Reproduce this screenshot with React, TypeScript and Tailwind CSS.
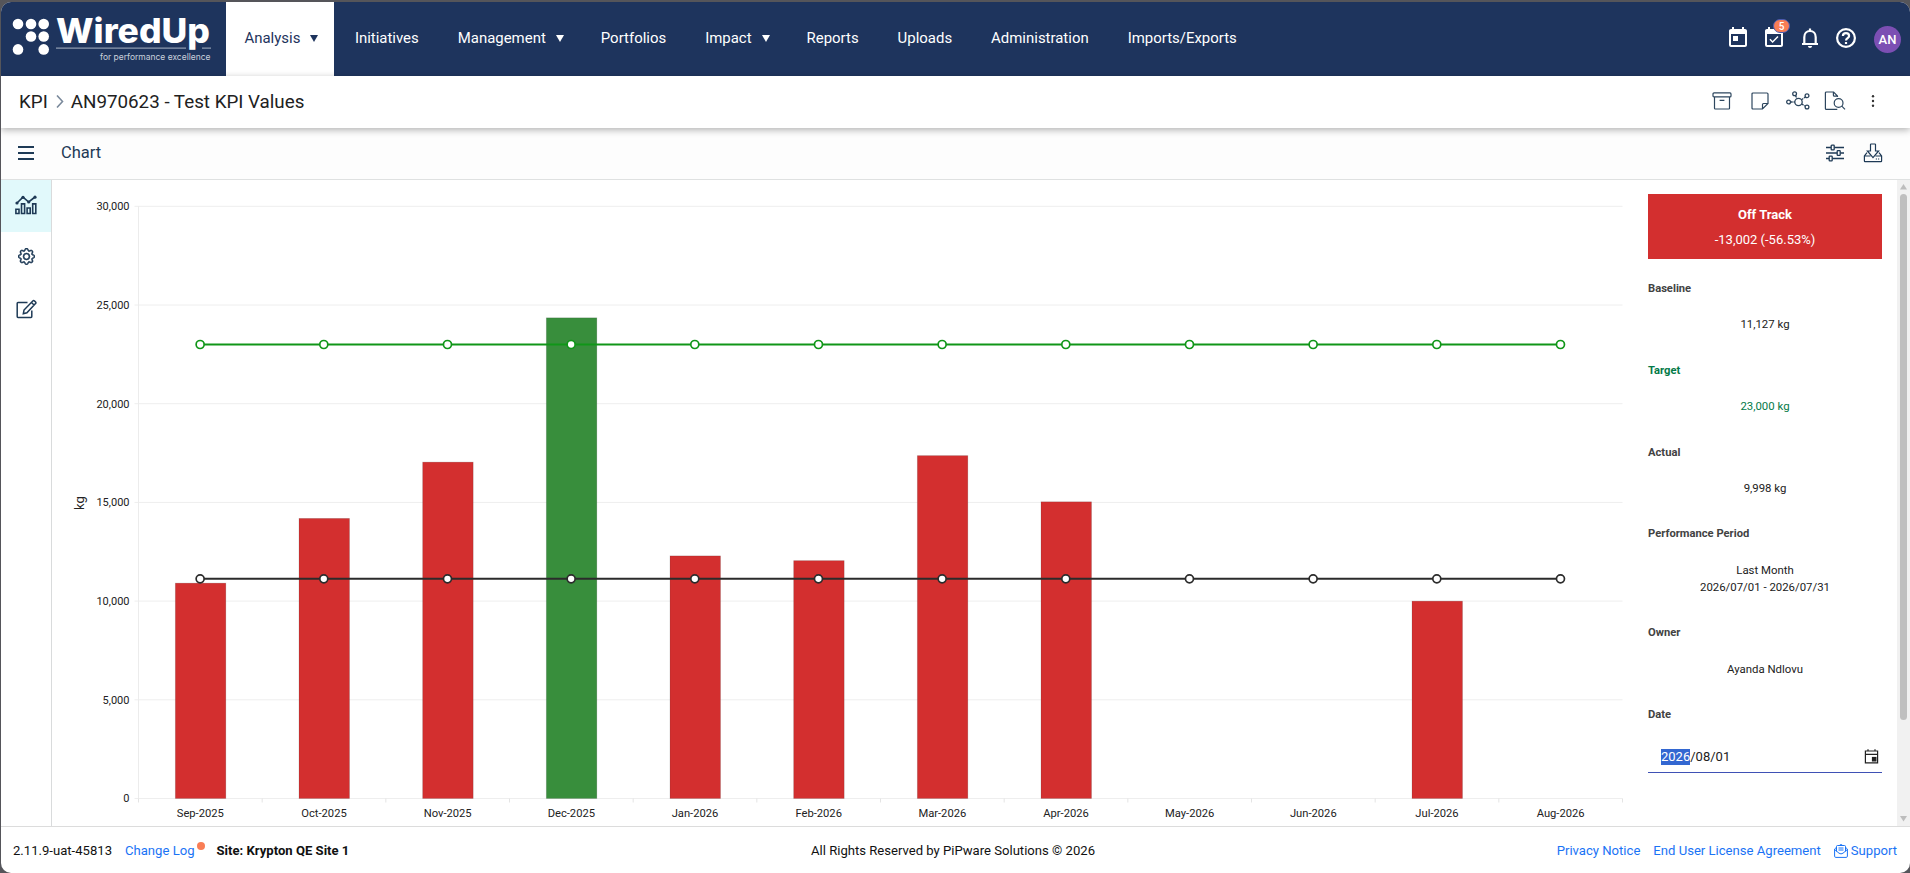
import React from 'react';
import { BsGear } from 'react-icons/bs';
import { MdEventAvailable, MdToday } from 'react-icons/md';

interface NavItem {
  label: string;
  menu?: boolean;
  active?: boolean;
}

const NAV_ITEMS: NavItem[] = [
  { label: 'Analysis', menu: true, active: true },
  { label: 'Initiatives' },
  { label: 'Management', menu: true },
  { label: 'Portfolios' },
  { label: 'Impact', menu: true },
  { label: 'Reports' },
  { label: 'Uploads' },
  { label: 'Administration' },
  { label: 'Imports/Exports' },
];

const TARGET = 23000;
const BASELINE = 11127;

const DATA: { month: string; value: number | null }[] = [
  { month: 'Sep-2025', value: 10910 },
  { month: 'Oct-2025', value: 14190 },
  { month: 'Nov-2025', value: 17040 },
  { month: 'Dec-2025', value: 24350 },
  { month: 'Jan-2026', value: 12290 },
  { month: 'Feb-2026', value: 12050 },
  { month: 'Mar-2026', value: 17370 },
  { month: 'Apr-2026', value: 15030 },
  { month: 'May-2026', value: null },
  { month: 'Jun-2026', value: null },
  { month: 'Jul-2026', value: 9998 },
  { month: 'Aug-2026', value: null },
];

const DETAILS = [
  { label: 'Baseline', lines: ['11,127 kg'] },
  { label: 'Target', lines: ['23,000 kg'], green: true },
  { label: 'Actual', lines: ['9,998 kg'] },
  { label: 'Performance Period', lines: ['Last Month', '2026/07/01 - 2026/07/31'] },
  { label: 'Owner', lines: ['Ayanda Ndlovu'] },
];

const Logo: React.FC = () => (
  <svg width="225" height="74" viewBox="0 2 225 74" className="shrink-0" fill="#fff">
    {[[17, 24], [30, 24], [42.7, 24], [30, 36.5], [42.7, 36.5], [17, 49.4], [42.7, 49.4]].map(([x, y]) => (
      <circle key={`${x}-${y}`} cx={x} cy={y} r="5.3" />
    ))}
    <text x="55" y="42.7" fontFamily="Inter, sans-serif" fontWeight="800" fontSize="34" textLength="154" lengthAdjust="spacingAndGlyphs">
      WiredUp
    </text>
    <path d="M55 48.2H185M201 48.2H210" stroke="#8d9ab0" strokeWidth="1.2" />
    <text x="99" y="60.3" fontFamily="Inter, sans-serif" fontSize="8.6" fill="#c9d0dc" textLength="110.5" lengthAdjust="spacingAndGlyphs">
      for performance excellence
    </text>
  </svg>
);

const TopNav: React.FC = () => (
  <header className="flex h-[74px] shrink-0 bg-[#1e345d] text-white">
    <Logo />
    <nav className="flex grow text-[14.95px]">
      {NAV_ITEMS.map((item) => (
        <div
          key={item.label}
          className={`flex items-center gap-[10px] pb-[1px] ${item.active ? 'mr-[1px] bg-white pr-[18px] pl-[18.5px] text-[#1e345d]' : 'px-[19.5px]'}`}
        >
          <span>{item.label}</span>
          {item.menu && (
            <svg width="8" height="7" viewBox="0 0 8 7" className="-mr-[2px]" fill="currentColor">
              <path d="M0 0H8L4 7Z" />
            </svg>
          )}
        </div>
      ))}
    </nav>
    <div className="flex items-center gap-[12px] pr-[9px] pb-[3px]">
      <MdToday size={24} />
      <div className="relative">
        <MdEventAvailable size={24} />
        <span className="absolute -top-[6.5px] left-[11px] flex h-[14px] w-[17px] items-center justify-center rounded-full border border-[#4a5bb0] bg-[#f97d55] text-[10px] font-medium">
          5
        </span>
      </div>
      <svg width="24" height="24" viewBox="0 0 24 24" fill="none" stroke="currentColor" strokeWidth="2.2">
        <path d="M4 18H20M6.3 18V11.2C6.3 7.6 8.6 5 12 5S17.7 7.6 17.7 11.2V18M12 2.6V5" />
        <path d="M9.8 20H14.2Q13.8 22 12 22T9.8 20Z" fill="currentColor" stroke="none" />
      </svg>
      <svg width="24" height="24" viewBox="0 0 24 24" fill="none" stroke="currentColor" strokeWidth="2.2">
        <circle cx="12" cy="12" r="8.9" />
        <path d="M8.9 10.1C8.9 8.3 10.2 7.2 12 7.2S15.1 8.4 15.1 10C15.1 12.1 12 12.2 12 14.6M12 16V18" />
      </svg>
      <div className="mt-[4px] ml-[4px] flex h-[27px] w-[27px] items-center justify-center rounded-full bg-[#7c4fb3] text-[13px] font-medium">AN</div>
    </div>
  </header>
);

const TitleBar: React.FC = () => (
  <div className="z-10 flex h-[52px] shrink-0 items-center bg-white pt-[1px] pl-[18px] text-[18.8px] text-[#212121] shadow-[0_2px_7px_rgba(0,0,0,0.3)]">
    <span>KPI</span>
    <svg width="8" height="13" viewBox="0 0 8 13" className="mr-[7px] mb-[2px] ml-[8px]" fill="none" stroke="#7b8a9c" strokeWidth="1.6">
      <path d="M1 .5L6.5 6.5L1 12.5" />
    </svg>
    <span className="grow">AN970623 - Test KPI Values</span>
    <div className="flex items-center pb-[4px] text-[#2d465e]">
      <svg width="20" height="20" viewBox="0 0 20 20" fill="none" stroke="currentColor" strokeWidth="1.2">
        <rect x="1" y="1.9" width="18" height="4" rx="1" />
        <path d="M2.5 6V17.2Q2.5 18 3.3 18H16.7Q17.5 18 17.5 17.2V6M7.6 9.3H12.4" />
      </svg>
      <svg width="20" height="20" viewBox="0 0 20 20" className="ml-[18px]" fill="none" stroke="currentColor" strokeWidth="1.2">
        <path d="M3 2H17Q18 2 18 3V12.5L12.5 18H3Q2 18 2 17V3Q2 2 3 2ZM12.5 18V13.5Q12.5 12.5 13.5 12.5H18" />
      </svg>
      <svg width="24" height="20" viewBox="0 0 24 20" className="ml-[16px]" fill="none" stroke="currentColor" strokeWidth="1.3">
        <circle cx="12.5" cy="11" r="3.7" />
        <circle cx="2.6" cy="11" r="1.9" />
        <circle cx="8.6" cy="2.8" r="1.9" />
        <circle cx="21" cy="4.8" r="1.9" />
        <circle cx="21" cy="16" r="1.9" />
        <path d="M4.5 11H8.8M9.5 4.6L11 7.6M15.5 8.7L19.3 6M15.7 13L19.2 15" strokeDasharray="2.2 .8" />
      </svg>
      <svg width="22" height="20" viewBox="0 0 22 20" className="ml-[14px]" fill="none" stroke="currentColor" strokeWidth="1.2">
        <path d="M13.3 18.4H2.4Q1.4 18.4 1.4 17.4V2Q1.4 1 2.4 1H9.6L13.5 5V6M9.4 1V4.2Q9.4 5.2 10.4 5.2H13.5" />
        <circle cx="14.6" cy="12" r="4.4" />
        <path d="M17.8 15.2L21 18.4" />
      </svg>
      <svg width="4" height="14" viewBox="0 0 4 14" className="mr-[35px] ml-[25px]" fill="#333">
        <circle cx="2" cy="2.3" r="1.2" />
        <circle cx="2" cy="7" r="1.2" />
        <circle cx="2" cy="11.7" r="1.2" />
      </svg>
    </div>
  </div>
);

const Toolbar: React.FC = () => (
  <div className="flex h-[52px] shrink-0 items-center border-b border-[#dfe1e1] bg-[#fdfdfd] text-[#1e3a56]">
    <svg width="16" height="14" viewBox="0 0 16 14" className="mb-[1px] ml-[17px]" stroke="currentColor" strokeWidth="1.8">
      <path d="M0 1H16M0 7H16M0 13H16" />
    </svg>
    <span className="ml-[27px] grow text-[16.5px]">Chart</span>
    <svg width="20" height="18" viewBox="0 0 20 18" className="mb-[2px]" fill="none" stroke="currentColor" strokeWidth="1.3">
      <path d="M1 3.5H6M9.4 3.5H19M1 9H12M15.4 9H19M1 14.5H4M7.4 14.5H19" />
      <rect x="6.2" y="1.2" width="3" height="4.6" rx=".6" />
      <rect x="12.2" y="6.7" width="3" height="4.6" rx=".6" />
      <rect x="4.2" y="12.2" width="3" height="4.6" rx=".6" />
    </svg>
    <svg width="20" height="20" viewBox="0 0 20 20" className="mr-[27px] mb-[2px] ml-[18px]" fill="none" stroke="currentColor" strokeWidth="1.2">
      <path d="M7.5 1.6Q7.5 1 8.1 1H11.9Q12.5 1 12.5 1.6V8H15.6L10 14.6L4.4 8H7.5Z" />
      <path d="M4 9.6L1.4 13V18Q1.4 18.6 2 18.6H18Q18.6 18.6 18.6 18V13L16 9.6M1.4 13H7.6M12.4 13H18.6" />
      <path d="M12.8 16H14M15 16H16.2" />
    </svg>
  </div>
);

const SideNav: React.FC = () => (
  <aside className="flex w-[51px] shrink-0 flex-col border-r border-[#d9dbdc] text-[#1e3a56]">
    <div className="flex h-[52px] items-center justify-center bg-[#e1f9fb] pb-[2px]">
      <svg width="22" height="20" viewBox="0 0 22 20" fill="none" stroke="currentColor" strokeWidth="1.6">
        <path d="M2 8L8 2.2L13.7 7L20 2" />
        <g fill="currentColor" stroke="none">
          <circle cx="2" cy="8" r="1.6" />
          <circle cx="8" cy="2.3" r="1.6" />
          <circle cx="13.7" cy="7" r="1.6" />
          <circle cx="20" cy="2.2" r="1.6" />
        </g>
        <path d="M.9 14.3H4V18.5H.9ZM6.5 8.9H9.6V18.5H6.5ZM12.1 13H15.2V18.5H12.1ZM17.7 8.9H20.8V18.5H17.7Z" />
      </svg>
    </div>
    <div className="flex h-[52px] items-center justify-center pb-[4px]">
      <BsGear size={17} strokeWidth={0.5} />
    </div>
    <div className="flex h-[52px] items-center justify-center pb-[3px]">
      <svg width="21" height="20" viewBox="0 0 21 20" fill="none" stroke="currentColor" strokeWidth="1.5">
        <path d="M11.5 3.5H2Q1.2 3.5 1.2 4.3V17.6Q1.2 18.4 2 18.4H15Q15.8 18.4 15.8 17.6V11.5" />
        <path d="M7.3 14.8L8 11L16.8 1.9Q17.6 1.1 18.4 1.9L19.6 3Q20.3 3.8 19.5 4.6L10.9 13.8ZM15.4 3.5L18.1 6" />
      </svg>
    </div>
  </aside>
);

// plot area inside the chart svg
const LEFT = 86.5;
const RIGHT = 1570.5;
const TOP = 26.3;
const BOTTOM = 618.5;
const STEP = (RIGHT - LEFT) / DATA.length;

const yOf = (value: number) => BOTTOM - (value / 30000) * (BOTTOM - TOP);
const xOf = (i: number) => LEFT + STEP * (i + 0.5);

const Series: React.FC<{ value: number; color: string }> = ({ value, color }) => (
  <g stroke={color} strokeWidth="2">
    <line x1={xOf(0)} x2={xOf(DATA.length - 1)} y1={yOf(value)} y2={yOf(value)} />
    {DATA.map((d, i) => (
      <circle key={d.month} cx={xOf(i) - 0.2} cy={yOf(value)} r="4" fill="#fff" strokeWidth="1.7" />
    ))}
  </g>
);

const KpiChart: React.FC = () => (
  <svg width="1572" height="646" viewBox="0 0 1572 646" className="shrink-0" fontSize="11" fill="#222">
    {[0, 5000, 10000, 15000, 20000, 25000, 30000].map((tick) => (
      <g key={tick}>
        <line x1={LEFT - 4} x2={RIGHT} y1={yOf(tick)} y2={yOf(tick)} stroke="#eeeeee" />
        <text x="77.5" y={yOf(tick) + 3.8} textAnchor="end">{tick.toLocaleString('en-US')}</text>
      </g>
    ))}
    <line x1={LEFT} x2={LEFT} y1={TOP} y2={BOTTOM} stroke="#ececec" />
    {[...DATA, null].map((_, i) => (
      <line key={i} x1={LEFT + STEP * i} x2={LEFT + STEP * i} y1={BOTTOM} y2={BOTTOM + 4} stroke="#e4e4e4" />
    ))}
    <text transform="translate(32 323) rotate(-90)" textAnchor="middle" fontSize="13">kg</text>
    {DATA.map((d, i) => (
      <g key={d.month}>
        {d.value !== null && (
          <rect
            x={xOf(i) - 25}
            y={yOf(d.value)}
            width="50.5"
            height={BOTTOM - yOf(d.value)}
            fill={d.value >= TARGET ? '#388e3c' : '#d32f2f'}
            stroke="#333"
            strokeOpacity=".2"
            strokeWidth=".8"
          />
        )}
        <text x={xOf(i)} y="637" textAnchor="middle" fontSize="11.2">{d.month}</text>
      </g>
    ))}
    <Series value={TARGET} color="#109618" />
    <Series value={BASELINE} color="#2b2b2b" />
  </svg>
);

const DetailsPanel: React.FC = () => (
  <div className="ml-[24px] w-[234px] shrink-0 pt-[14px] text-[11.4px] leading-[17px] text-[#212121]">
    <div className="flex h-[65px] flex-col items-center bg-[#d32f2f] pt-[12px] text-[13px] text-white">
      <span className="font-bold">Off Track</span>
      <span className="mt-[8px]">-13,002 (-56.53%)</span>
    </div>
    <div className="pt-[21px]">
      {DETAILS.map((row) => (
        <div key={row.label} className={`pb-[28.4px] ${row.green ? 'text-[#047a48]' : ''}`}>
          <div className={`text-[11.2px] font-bold ${row.green ? '' : 'text-[#424242]'}`}>{row.label}</div>
          <div className="pt-[19.4px] text-center">
            {row.lines.map((line) => (
              <div key={line}>{line}</div>
            ))}
          </div>
        </div>
      ))}
      <div className="text-[11.2px] font-bold text-[#424242]">Date</div>
      <div className="mt-[15px] flex h-[35px] items-center border-b border-[#3f51b5] pt-[4px] pr-[3px] pl-[13px] text-[13px]">
        <span className="bg-[#3367d1] leading-[16px] text-white">2026</span>
        <span className="grow">/08/01</span>
        <svg width="15" height="15" viewBox="0 0 15 15" fill="none" stroke="#212121" strokeWidth="1.2">
          <path d="M1.4 2H13.6V13.9H1.4ZM1.4 5.3H13.6M4 .3V2M11 .3V2" />
          <rect x="8.5" y="8.5" width="3.4" height="3.4" fill="#212121" />
        </svg>
      </div>
    </div>
  </div>
);

const Scrollbar: React.FC = () => (
  <div className="ml-auto flex w-[13px] flex-col items-center bg-[#f1f1f1] py-[4px]">
    <svg width="7" height="6" viewBox="0 0 7 6" fill="#bdbdbd">
      <path d="M3.5 0L7 5.5H0Z" />
    </svg>
    <div className="mt-[4px] h-[526px] w-[7px] rounded-full bg-[#bfbfbf]" />
    <svg width="7" height="6" viewBox="0 0 7 6" className="mt-auto" fill="#bdbdbd">
      <path d="M0 0H7L3.5 5.5Z" />
    </svg>
  </div>
);

const Footer: React.FC = () => (
  <footer className="grid h-[47px] shrink-0 grid-cols-3 items-center border-t border-[#dcdcdc] pr-[13px] pl-[12px] text-[13.1px] text-[#111]">
    <div className="flex items-center pt-[2px]">
      <span>2.11.9-uat-45813</span>
      <span className="ml-[13px] text-[#1a73f5]">Change Log</span>
      <span className="mb-[9px] ml-[2px] h-[8px] w-[8px] rounded-full bg-[#f97d55]" />
      <span className="ml-[12px] font-bold">Site: Krypton QE Site 1</span>
    </div>
    <div className="pt-[2px] pr-[4px] text-center">All Rights Reserved by PiPware Solutions © 2026</div>
    <div className="flex items-center justify-end pt-[2px] text-[#1a73f5]">
      <span>Privacy Notice</span>
      <span className="ml-[13px]">End User License Agreement</span>
      <svg width="14" height="14" viewBox="0 0 14 14" className="mr-[3px] ml-[13px]" fill="none" stroke="currentColor" strokeWidth="1">
        <path d="M2.5 3.3L.6 5V12.2Q.6 13.4 1.8 13.4H12.2Q13.4 13.4 13.4 12.2V5L11.5 3.3M2.5 7.4V2.5Q2.5 1.5 3.5 1.5H10.5Q11.5 1.5 11.5 2.5V7.4M.7 5.6L5 9.2Q7 10.6 9 9.2L13.3 5.6M4.5 4H9.5M4.5 6H9.5M5.5 1.3L7 .5L8.5 1.3" />
      </svg>
      <span>Support</span>
    </div>
  </footer>
);

export default function App() {
  return (
    <div className="h-[873px] w-[1910px] overflow-hidden bg-[#55555a] pt-[2px] pl-[1px] font-[Roboto,sans-serif]">
      <div className="flex h-[871px] flex-col overflow-hidden rounded-[10px] bg-white">
        <TopNav />
        <TitleBar />
        <Toolbar />
        <div className="flex min-h-0 grow">
          <SideNav />
          <KpiChart />
          <DetailsPanel />
          <Scrollbar />
        </div>
        <Footer />
      </div>
    </div>
  );
}
